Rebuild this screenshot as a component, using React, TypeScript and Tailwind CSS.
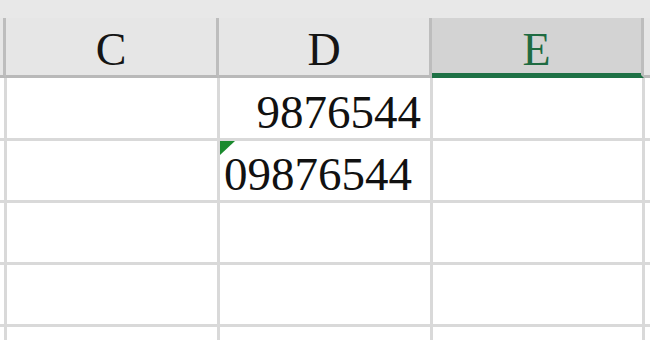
const font = { fontFamily: '"Liberation Serif", "Times New Roman", serif' };

type Cell = { text?: string; align?: 'left' | 'right'; flag?: boolean };

const widths = ['w-[6px]', 'w-[213px]', 'w-[213px]', 'w-[212px]', 'flex-1'];

const rows: Cell[][] = [
  [{}, {}, { text: '9876544', align: 'right' }, {}, {}],
  [{}, {}, { text: '09876544', align: 'left', flag: true }, {}, {}],
  [{}, {}, {}, {}, {}],
  [{}, {}, {}, {}, {}],
  [{}, {}, {}, {}, {}],
];

function HeaderRow() {
  const cols = ['', 'C', 'D', 'E', ''];
  return (
    <div className="flex h-[60px]">
      {cols.map((c, i) => {
        const selected = c === 'E';
        return (
          <div
            key={i}
            className={`${widths[i]} relative flex items-center justify-center border-b-[3px] ${
              i < 4 ? 'border-r-[3px] border-r-[#bdbdbd]' : ''
            } ${selected ? 'bg-[#d3d3d3] border-b-[#1e7145]' : 'bg-[#e6e6e6] border-b-[#b9b9b9]'}`}
          >
            {selected && <span className="absolute left-0 right-0 bottom-0 h-[2px] bg-[#1e7145]" />}
            <span
              className={`pt-[6px] text-[46px] leading-none ${selected ? 'text-[#1f6b42]' : 'text-[#151515]'}`}
              style={font}
            >
              {c}
            </span>
          </div>
        );
      })}
    </div>
  );
}

export default function App() {
  return (
    <div className="w-[650px] h-[340px] overflow-hidden bg-white">
      <div className="h-[18px] bg-[#e8e8e8]" />
      <HeaderRow />
      {rows.map((row, r) => (
        <div key={r} className={`flex ${r === 0 ? 'h-[63px]' : 'h-[62px]'}`}>
          {row.map((cell, i) => (
            <div
              key={i}
              className={`${widths[i]} relative flex items-center border-b-[3px] border-b-[#d9d9d9] ${
                i < 4 ? 'border-r-[3px] border-r-[#d9d9d9]' : ''
              } ${cell.align === 'right' ? 'justify-end pr-[9px]' : 'justify-start pl-[4px]'}`}
            >
              {cell.flag && (
                <svg className="absolute left-0 top-0" width="15" height="14" viewBox="0 0 15 14">
                  <polygon points="0,0 15,0 0,14" fill="#1a8a2e" />
                </svg>
              )}
              {cell.text && (
                <span className="pt-[8px] text-[47px] leading-none text-[#111]" style={font}>
                  {cell.text}
                </span>
              )}
            </div>
          ))}
        </div>
      ))}
    </div>
  );
}
